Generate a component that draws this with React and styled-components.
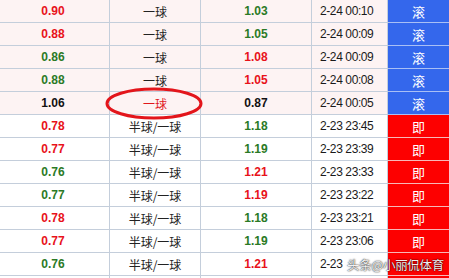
import React from "react";
import styled, { createGlobalStyle } from "styled-components";

const Global = createGlobalStyle`
  html, body { margin: 0; padding: 0; background: #fff; overflow: hidden; }
  body { font-family: "Liberation Sans", "Noto Sans CJK SC", sans-serif; }
`;

const Page = styled.div`
  position: relative;
  width: 449px;
  height: 278px;
  overflow: hidden;
`;

const Table = styled.div`
  display: grid;
  grid-template-columns: 110px 91px 111px 76px 62px;
  grid-auto-rows: 23px;
`;

const Cell = styled.div`
  display: flex;
  align-items: center;
  justify-content: center;
  box-sizing: border-box;
  border-bottom: 1px solid #c4cedb;
  border-right: 1px solid #c4cedb;
  background: ${(p) => (p.$live ? "#fdf3f3" : "#ffffff")};
  font-size: 12px;
  white-space: nowrap;
`;

const Odds = styled(Cell)`
  font-weight: bold;
  color: ${(p) => ({ r: "#e8121a", g: "#2b7a26", k: "#111111" }[p.$c])};
  padding-right: ${(p) => (p.$first ? "3px" : "0")};
`;

const Handicap = styled(Cell)`
  color: ${(p) => (p.$hl ? "#e0161b" : "#222222")};
  font-family: "Noto Sans CJK SC", sans-serif;
`;

const Time = styled(Cell)`
  color: #1a1a1a;
  font-size: 12px;
  letter-spacing: -0.4px;
  justify-content: flex-start;
  padding-left: 8px;
`;

const Badge = styled(Cell)`
  background: ${(p) => (p.$live ? "#3467ec" : "#fd0000")};
  border-bottom-color: ${(p) => (p.$live ? "#a9bff5" : "#f7b8b8")};
  color: #fff;
  font-family: "Noto Sans CJK SC", sans-serif;
  font-size: 13px;
  border-right: none;
  padding-right: 1px;
`;

const Ring = styled.svg`
  position: absolute;
  left: 105px;
  top: 87px;
  width: 98px;
  height: 33px;
  pointer-events: none;
`;

const Watermark = styled.div`
  position: absolute;
  left: 347px;
  top: 255px;
  font-family: "Noto Sans CJK SC", sans-serif;
  font-size: 12.5px;
  color: rgba(255, 255, 255, 0.95);
  text-shadow: 0 0 2px rgba(0, 0, 0, 0.75), 0 0 1px rgba(0, 0, 0, 0.8);
  white-space: nowrap;
  letter-spacing: -0.3px;
`;

const rows = [
  { a: "0.90", ac: "r", h: "一球", b: "1.03", bc: "g", t: "2-24 00:10", live: true, k: "滚" },
  { a: "0.88", ac: "r", h: "一球", b: "1.05", bc: "g", t: "2-24 00:09", live: true, k: "滚" },
  { a: "0.86", ac: "g", h: "一球", b: "1.08", bc: "r", t: "2-24 00:09", live: true, k: "滚" },
  { a: "0.88", ac: "g", h: "一球", b: "1.05", bc: "r", t: "2-24 00:08", live: true, k: "滚" },
  { a: "1.06", ac: "k", h: "一球", b: "0.87", bc: "k", t: "2-24 00:05", live: true, hl: true, k: "滚" },
  { a: "0.78", ac: "r", h: "半球/一球", b: "1.18", bc: "g", t: "2-23 23:45", k: "即" },
  { a: "0.77", ac: "r", h: "半球/一球", b: "1.19", bc: "g", t: "2-23 23:39", k: "即" },
  { a: "0.76", ac: "g", h: "半球/一球", b: "1.21", bc: "r", t: "2-23 23:33", k: "即" },
  { a: "0.77", ac: "g", h: "半球/一球", b: "1.19", bc: "r", t: "2-23 23:22", k: "即" },
  { a: "0.78", ac: "r", h: "半球/一球", b: "1.18", bc: "g", t: "2-23 23:21", k: "即" },
  { a: "0.77", ac: "r", h: "半球/一球", b: "1.19", bc: "g", t: "2-23 23:06", k: "即" },
  { a: "0.76", ac: "g", h: "半球/一球", b: "1.21", bc: "r", t: "2-23", k: "" },
  { a: "", ac: "k", h: "", b: "", bc: "k", t: "", k: "" },
];

export default function App() {
  return (
    <Page>
      <Global />
      <Table>
        {rows.map((r, i) => (
          <React.Fragment key={i}>
            <Odds $live={r.live} $c={r.ac} $first>{r.a}</Odds>
            <Handicap $live={r.live} $hl={r.hl}>{r.h}</Handicap>
            <Odds $live={r.live} $c={r.bc}>{r.b}</Odds>
            <Time $live={r.live}>{r.t}</Time>
            <Badge $live={r.live}>{r.k}</Badge>
          </React.Fragment>
        ))}
      </Table>
      <Ring viewBox="0 0 98 33">
        <ellipse cx="49" cy="16.5" rx="47" ry="14.5" fill="none" stroke="#e3151b" strokeWidth="3" />
      </Ring>
      <Watermark>头条@小丽侃体育</Watermark>
    </Page>
  );
}
